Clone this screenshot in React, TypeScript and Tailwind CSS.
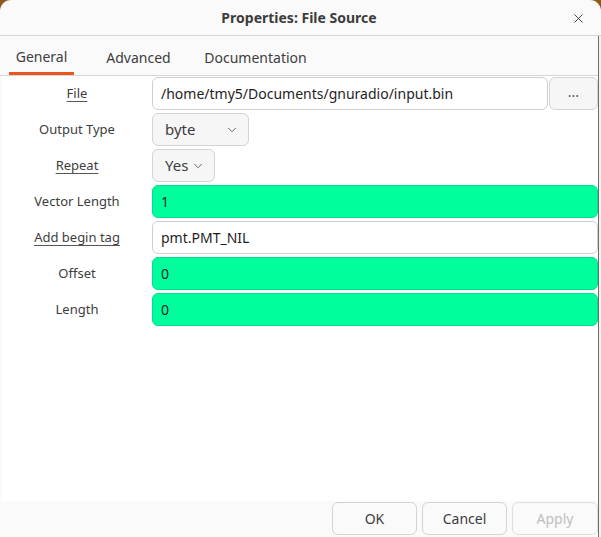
import { ChevronDown, X } from "lucide-react";

// GNU Radio Companion 的属性对话框：一个标签页 + 参数行 + 底部按钮
const font = "font-['Noto_Sans','DejaVu_Sans',sans-serif]";

type Param = {
  label: string;
  underline?: boolean;
  kind: "text" | "green" | "combo" | "file";
  value: string;
  comboWidth?: string;
};

const params: Param[] = [
  { label: "File", underline: true, kind: "file", value: "/home/tmy5/Documents/gnuradio/input.bin" },
  { label: "Output Type", kind: "combo", value: "byte", comboWidth: "w-[97px]" },
  { label: "Repeat", underline: true, kind: "combo", value: "Yes", comboWidth: "w-[63px]" },
  { label: "Vector Length", kind: "green", value: "1" },
  { label: "Add begin tag", underline: true, kind: "text", value: "pmt.PMT_NIL" },
  { label: "Offset", kind: "green", value: "0" },
  { label: "Length", kind: "green", value: "0" },
];

function Field({ p }: { p: Param }) {
  if (p.kind === "combo") {
    return (
      <div
        className={`flex h-[33px] ${p.comboWidth} items-center justify-between rounded-[6px] border border-[#d4d4d4] bg-[#f6f6f6] pl-[12px] pr-[9px] text-[15px] text-[#3d3d3d]`}
      >
        <span>{p.value}</span>
        <ChevronDown size={14} strokeWidth={1.5} className="text-[#555]" />
      </div>
    );
  }
  if (p.kind === "file") {
    return (
      <div className="flex flex-1 gap-px">
        <div className="flex h-[33px] flex-1 items-center rounded-[6px] border border-[#cfcfcf] bg-white px-[8px] text-[14px] text-[#1e1e1e]">
          {p.value}
        </div>
        <div className="flex h-[33px] w-[49px] items-center justify-center rounded-[6px] border border-[#d4d4d4] bg-[#f6f6f6] pb-[4px] text-[14px] text-[#555]">
          ...
        </div>
      </div>
    );
  }
  const bg = p.kind === "green" ? "bg-[#00ff9c] border-[#00e08a]" : "bg-white border-[#cfcfcf]";
  return (
    <div className={`flex h-[33px] flex-1 items-center rounded-[6px] border px-[8px] text-[14px] text-[#1e1e1e] ${bg}`}>
      {p.value}
    </div>
  );
}

export default function App() {
  return (
    <div className={`h-[537px] w-[601px] bg-[#8a5a1e] ${font}`}>
      <div className="flex h-full w-full flex-col overflow-hidden rounded-t-[11px] bg-[#fafafa]">
        {/* 标题栏 */}
        <div className="relative flex h-[36px] shrink-0 items-center justify-center border-b border-[#d6d6d6] pr-[3px]">
          <span className="text-[14px] font-bold text-[#3d3d3d]">Properties: File Source</span>
          <X size={15} strokeWidth={1.5} className="absolute right-[15px] top-[11px] text-[#3d3d3d]" />
        </div>

        <div className="flex flex-1 min-h-0">
          <div className="flex flex-1 flex-col">
            {/* 标签页 */}
            <div className="flex h-[40px] shrink-0 items-end border-b border-[#d6d6d6] pl-[9px] text-[14px] text-[#3d3d3d]">
              <div className="flex h-full w-[65px] items-center justify-center border-b-[3px] border-[#e95420] pt-[4px]">General</div>
              <div className="ml-[21px] flex h-full w-[87px] items-center justify-center pt-[4px]">Advanced</div>
              <div className="ml-[11px] flex h-full w-[125px] items-center justify-center pt-[4px]">Documentation</div>
            </div>

            {/* 参数 */}
            <div className="ml-[2px] flex flex-1 flex-col gap-[3px] bg-white pt-[1px]">
              {params.map((p) => (
                <div key={p.label} className="flex items-center">
                  <div className="w-[150px] shrink-0 text-center text-[13px] text-[#3d3d3d]">
                    <span className={p.underline ? "underline decoration-[#555] underline-offset-[3px]" : ""}>
                      {p.label}
                    </span>
                  </div>
                  <Field p={p} />
                </div>
              ))}
            </div>

            {/* 按钮 */}
            <div className="flex h-[36px] shrink-0 items-start justify-end gap-[5px] pt-px text-[14px]">
              <button className="h-[33px] w-[85px] rounded-[6px] border border-[#d4d4d4] bg-[#fafafa] text-[#3d3d3d]">OK</button>
              <button className="h-[33px] w-[85px] rounded-[6px] border border-[#d4d4d4] bg-[#fafafa] text-[#3d3d3d]">Cancel</button>
              <button className="h-[33px] w-[86px] rounded-[6px] border border-[#dedede] bg-[#fafafa] text-[#c0c0c0]">Apply</button>
            </div>
          </div>
          <div className="w-px shrink-0 bg-[#6e6e6e]" />
          <div className="w-[2px] shrink-0 bg-[#f2f2f2]" />
        </div>
      </div>
    </div>
  );
}
